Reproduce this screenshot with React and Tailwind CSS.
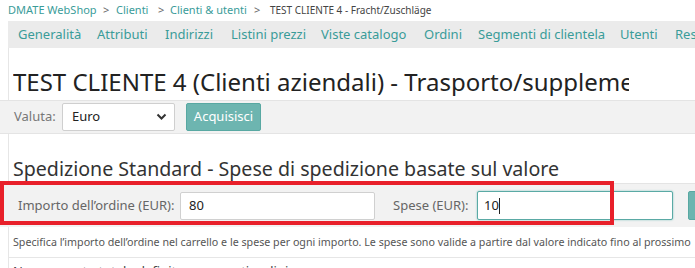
import React from 'react';

// tab label + the width its slot takes in the bar
const navItems = [
  ['Generalità', 'w-[79px]'],
  ['Attributi', 'w-[68px]'],
  ['Indirizzi', 'w-[66px]'],
  ['Listini prezzi', 'w-[90px]'],
  ['Viste catalogo', 'w-[103px]'],
  ['Ordini', 'w-[54px]'],
  ['Segmenti di clientela', 'w-[142px]'],
  ['Utenti', 'w-[55px]'],
  ['Restrizioni', 'w-[90px]'],
];

function Crumbs() {
  return (
    <div className="h-[21px] pl-[8px] flex items-center text-[11px] whitespace-nowrap">
      <span className="w-[95px] shrink-0 text-[#3a9c99]">DMATE WebShop</span>
      <span className="w-[13px] shrink-0 text-[#666]">&gt;</span>
      <span className="w-[42px] shrink-0 text-[#3a9c99]">Clienti</span>
      <span className="w-[12px] shrink-0 text-[#666]">&gt;</span>
      <span className="w-[84px] shrink-0 text-[#3a9c99]">Clienti &amp; utenti</span>
      <span className="w-[16px] shrink-0 text-[#666]">&gt;</span>
      <span className="text-[10px] text-[#444]">TEST CLIENTE 4 - Fracht/Zuschläge</span>
    </div>
  );
}

export default function App() {
  return (
    <div
      className="relative w-[695px] h-[268px] overflow-hidden bg-white"
      style={{ fontFamily: '"Noto Sans", "DejaVu Sans", sans-serif' }}
    >
      <Crumbs />

      {/* tabs */}
      <div className="ml-[8px] h-[27px] bg-[#ebebeb] flex items-center pl-[10px] text-[13px] text-[#3a9c99] whitespace-nowrap overflow-hidden">
        {navItems.map(([label, w]) => (
          <span key={label} className={`${w} shrink-0`}>{label}</span>
        ))}
      </div>

      {/* title */}
      <div className="ml-[8px] border-l border-[#e6e6e6] h-[52px] pt-[20px] pl-[4px]">
        <div className="w-[616px] overflow-hidden whitespace-nowrap text-[24px] leading-[28px] text-[#222]">
          TEST CLIENTE 4 (Clienti aziendali) - Trasporto/supplementi
        </div>
      </div>

      {/* currency toolbar */}
      <div className="h-[34px] bg-[#f2f2f2] border-y border-[#e4e4e4] flex items-center pl-[14px] text-[13px]">
        <span className="text-[#777] w-[48px] shrink-0">Valuta:</span>
        <div className="w-[113px] h-[28px] shrink-0 bg-white border border-[#cfcfcf] rounded-[2px] flex items-center justify-between pl-[9px] pr-[7px] text-[#222]">
          <span>Euro</span>
          <svg width="11" height="8" viewBox="0 0 11 8">
            <path d="M1.5 1.5 L5.5 5.5 L9.5 1.5" stroke="#333" strokeWidth="2" fill="none" />
          </svg>
        </div>
        <button className="ml-[11px] w-[75px] h-[28px] shrink-0 bg-[#6db5b0] border border-[#58a8a2] rounded-[2px] text-white text-[13px]">
          Acquisisci
        </button>
      </div>

      {/* section heading */}
      <div className="ml-[8px] border-l border-[#e6e6e6] h-[49px] pt-[23px] pl-[4px]">
        <div className="text-[19.6px] leading-[24px] text-[#333] whitespace-nowrap">
          Spedizione Standard - Spese di spedizione basate sul valore
        </div>
      </div>

      {/* amount row */}
      <div className="h-[44px] bg-[#f2f2f2] border-t border-[#e4e4e4] flex items-center pl-[18px] text-[13px] whitespace-nowrap">
        <span className="text-[#666] w-[162px] shrink-0">Importo dell’ordine (EUR):</span>
        <div className="w-[195px] h-[28px] shrink-0 bg-white border border-[#d0d0d0] rounded-[2px] flex items-center pl-[8px] text-[#222]">
          80
        </div>
        <span className="ml-[18px] w-[84px] shrink-0 text-[#666]">Spese (EUR):</span>
        <div className="w-[196px] h-[29px] shrink-0 bg-white border border-[#5aaaa5] shadow-[0_0_2px_#7fc1bd] rounded-[2px] flex items-center pl-[6px] text-[#222]">
          10<span className="w-px h-[16px] bg-[#222]" />
        </div>
        <div className="ml-[15px] w-[40px] h-[29px] shrink-0 bg-[#6db5b0] border border-[#58a8a2] rounded-[2px]" />
      </div>

      {/* help */}
      <div className="ml-[8px] border-l border-[#e6e6e6]">
        <div className="h-[31px] flex items-center pl-[4px] text-[10.7px] text-[#555] whitespace-nowrap border-b border-[#e6e6e6]">
          Specifica l’importo dell’ordine nel carrello e le spese per ogni importo. Le spese sono valide a partire dal valore indicato fino al prossimo
        </div>
        <div className="pt-[4px] pl-[4px] text-[13px] text-[#444] whitespace-nowrap">
          Nessun costo totale definito per questi ordini.
        </div>
      </div>

      {/* red annotation frame */}
      <div className="absolute left-0 top-[181px] w-[614px] h-[44px] border-[4px] border-[#e8202a] pointer-events-none" />
    </div>
  );
}
